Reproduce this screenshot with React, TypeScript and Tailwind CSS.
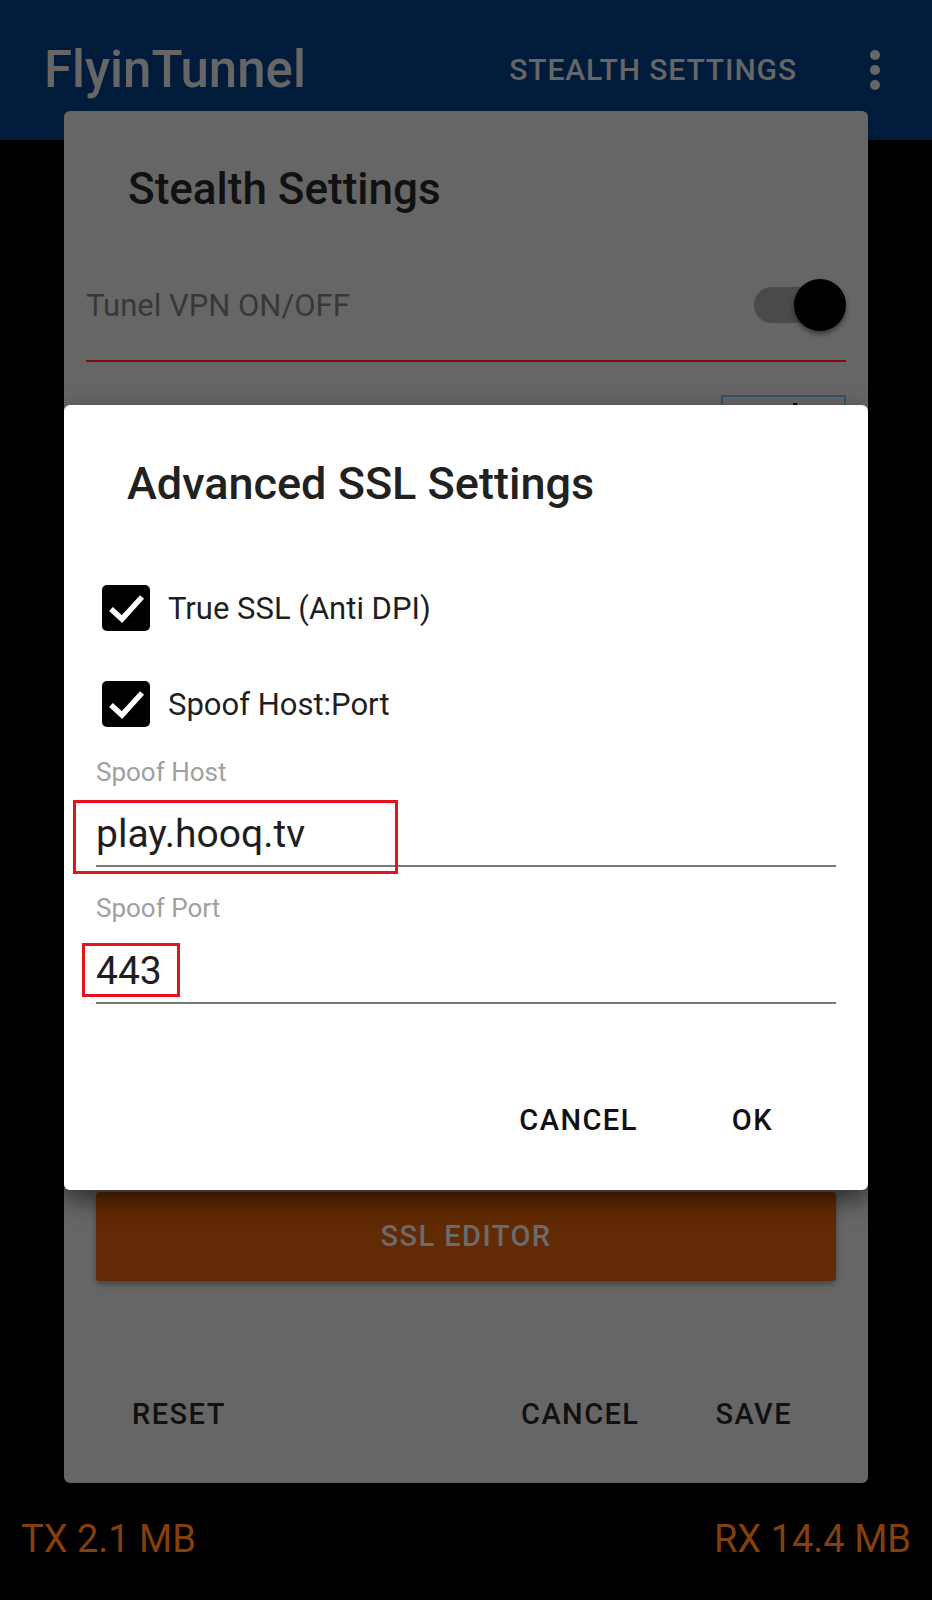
import type { ReactNode } from 'react'

const font = "font-['Roboto','Noto_Sans',sans-serif]"

function CheckRow({ label }: { label: string }) {
  return (
    <div className="flex items-center gap-[18px] h-[46px]">
      <span className="w-[48px] h-[46px] rounded-[5px] bg-black flex items-center justify-center">
        <svg viewBox="0 0 48 46" className="w-[48px] h-[46px]">
          <polyline points="9,24 20,34 40,12" fill="none" stroke="white" strokeWidth="5.5" />
        </svg>
      </span>
      <span className="text-[31px] leading-[31px] text-[#1f1f1f]">{label}</span>
    </div>
  )
}

function Field({
  label,
  value,
  className,
  valueClassName,
  mark,
}: {
  label: string
  value: string
  className?: string
  valueClassName?: string
  mark: ReactNode
}) {
  return (
    <div className={className}>
      <div className="text-[26px] leading-[26px] text-[#a0a0a0]">{label}</div>
      <div
        className={`relative pb-[12px] border-b-2 border-[#777777] text-[39px] leading-[38px] text-[#1e1e1e] ${valueClassName ?? ''}`}
      >
        {value}
        {mark}
      </div>
    </div>
  )
}

export default function App() {
  return (
    <div className={`relative w-[932px] h-[1600px] bg-black overflow-hidden flex flex-col ${font}`}>
      {/* App bar */}
      <header className="h-[140px] bg-[#001c3a] flex items-center pl-[44px] pr-[52px]">
        <h1 className="text-[51px] leading-[50px] font-medium text-[#666666]">FlyinTunnel</h1>
        <div className="flex-1" />
        <span className="text-[30px] leading-[30px] font-medium tracking-[0.03em] text-[#666666]">
          STEALTH SETTINGS
        </span>
        <div className="ml-[73px] flex flex-col gap-[5px]">
          <span className="w-[10px] h-[10px] rounded-full bg-[#666666]" />
          <span className="w-[10px] h-[10px] rounded-full bg-[#666666]" />
          <span className="w-[10px] h-[10px] rounded-full bg-[#666666]" />
        </div>
      </header>

      <main className="flex-1" />

      {/* Traffic counters */}
      <footer className="flex justify-between px-[21px] pb-[42px] text-[38px] leading-[38px] text-[#843f0e]">
        <span>TX 2.1 MB</span>
        <span>RX 14.4 MB</span>
      </footer>

      {/* Stealth settings dialog (behind) */}
      <div className="absolute left-[64px] top-[111px] w-[804px] h-[1372px] rounded-[6px] bg-[#666666] flex flex-col">
        <h2 className="mt-[56px] ml-[64px] text-[44px] leading-[44px] font-medium text-[#111111]">
          Stealth Settings
        </h2>
        <div className="mt-[68px] mx-[22px] h-[52px] flex items-center justify-between">
          <span className="text-[31px] leading-[31px] text-[#383838]">Tunel VPN ON/OFF</span>
          <div className="relative w-[92px] h-[52px]">
            <span className="absolute left-0 top-[8px] w-[80px] h-[36px] rounded-full bg-[#4a4a4a]" />
            <span className="absolute right-0 top-0 w-[52px] h-[52px] rounded-full bg-black shadow-[0_3px_5px_rgba(0,0,0,0.45)]" />
          </div>
        </div>
        <div className="mt-[29px] mx-[22px] h-[2px] bg-[#7a0b0b]" />
        <div className="relative mt-[33px] ml-auto mr-[22px] w-[125px] h-[60px] border-2 border-[#2b5670]">
          <span className="absolute left-[70px] top-[6px] w-[4px] h-[6px] bg-black" />
        </div>
        <div className="flex-1" />
        <div className="mx-[32px] h-[89px] rounded-[4px] bg-[#622a05] shadow-[0_3px_6px_rgba(0,0,0,0.35)] flex items-center justify-center text-[29px] leading-[29px] font-medium tracking-[0.05em] text-[#6b6b6b]">
          SSL EDITOR
        </div>
        <div className="mt-[119px] mb-[54px] h-[29px] pl-[68px] pr-[76px] flex text-[29px] leading-[29px] font-medium tracking-[0.05em] text-[#111111]">
          <span>RESET</span>
          <span className="flex-1" />
          <span>CANCEL</span>
          <span className="ml-[76px]">SAVE</span>
        </div>
      </div>

      {/* Advanced SSL settings dialog (front) */}
      <div className="absolute left-[64px] top-[405px] w-[804px] h-[785px] rounded-[6px] bg-white shadow-[0_10px_24px_rgba(0,0,0,0.55)] flex flex-col">
        <h2 className="mt-[57px] ml-[63px] text-[45px] leading-[44px] font-medium text-[#212121]">
          Advanced SSL Settings
        </h2>
        <div className="mt-[79px] px-[38px] flex flex-col gap-[50px]">
          <CheckRow label="True SSL (Anti DPI)" />
          <CheckRow label="Spoof Host:Port" />
        </div>
        <div className="px-[32px]">
          <Field
            className="mt-[32px]"
            valueClassName="mt-[30px]"
            label="Spoof Host"
            value="play.hooq.tv"
            mark={<span className="absolute -left-[23px] -top-[15px] w-[325px] h-[74px] border-[3px] border-[#e5141c]" />}
          />
          <Field
            className="mt-[28px]"
            valueClassName="mt-[31px]"
            label="Spoof Port"
            value="443"
            mark={<span className="absolute -left-[14px] -top-[9px] w-[98px] h-[54px] border-[3px] border-[#e5141c]" />}
          />
        </div>
        <div className="mt-[102px] pr-[95px] flex justify-end text-[29px] leading-[29px] font-medium tracking-[0.05em] text-[#111111]">
          <span>CANCEL</span>
          <span className="ml-[94px]">OK</span>
        </div>
      </div>
    </div>
  )
}
